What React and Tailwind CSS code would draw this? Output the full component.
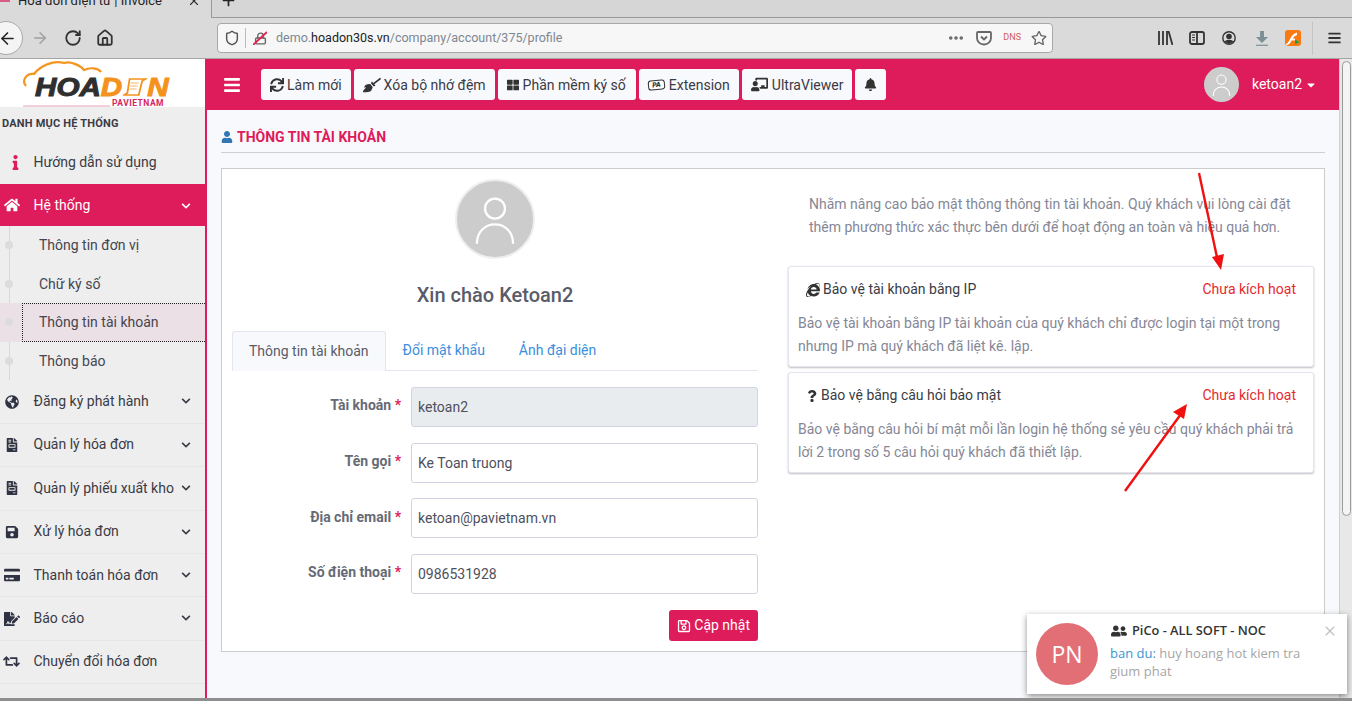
import React from "react";
import { FaSync, FaBroom, FaThLarge, FaBell, FaHome, FaInfo, FaGlobeAmericas, FaFileInvoice, FaSave, FaCreditCard, FaFileSignature, FaRetweet, FaUser, FaInternetExplorer, FaQuestion, FaChevronDown, FaBars, FaChalkboardTeacher, FaRegSave, FaCaretDown, FaUserFriends, FaRegStar, FaUsers } from "react-icons/fa";
import { ArrowLeft, ArrowRight, RotateCw, Home, Shield, MoreHorizontal, X, Plus, Lock } from "lucide-react";

const Avatar = ({ cls }) => (
  <div className={cls}>
    <svg viewBox="0 0 80 80" className="w-full h-full">
      <circle cx="40" cy="29" r="10.5" fill="none" stroke="#fff" strokeWidth="2.4" />
      <path d="M21 66 C21 39 59 39 59 66" fill="none" stroke="#fff" strokeWidth="2.4" />
    </svg>
  </div>
);

const TopBtn = ({ icon, children, gap = "gap-[3px]", pad = "px-[9px]" }) => (
  <div className={"h-[31px] bg-[#f8f9fc] rounded-[3px] flex items-center text-[14px] text-[#3a3b45] whitespace-nowrap " + gap + " " + pad}>
    {icon}
    {children && <span className="pt-[1px]">{children}</span>}
  </div>
);

const NavRow = ({ icon, label, chevron = true }) => (
  <div className="h-[43.4px] flex items-center border-b border-[#e6e6e6] relative shrink-0">
    <span className="w-[33.5px] flex justify-center pr-[10px] text-[#2f3242] shrink-0">{icon}</span>
    <span className="text-[14px] text-[#3a3b45] whitespace-nowrap">{label}</span>
    {chevron && <FaChevronDown className="absolute left-[181px] top-[16px] text-[10px] text-[#3a3b45]" />}
  </div>
);

const SubRow = ({ label, active }) => (
  <div className={"h-[38.6px] flex items-center relative shrink-0 " + (active ? "bg-[#ebe0e5]" : "")}>
    <span className="absolute left-[5px] top-[15px] w-[8px] h-[8px] rounded-full bg-[#dcdcdc]" />
    {active && <span className="absolute left-[22px] top-0 bottom-0 right-0 border-y border-l border-dotted border-[#222]" />}
    <span className="ml-[39px] text-[14px] text-[#45464f] whitespace-nowrap relative">{label}</span>
  </div>
);

const Field = ({ label, value, disabled, cls, labelPt = "pt-[8px]" }) => (
  <div className={"flex items-start " + cls}>
    <div className={"w-[179px] pr-[10px] text-right text-[14px] font-bold text-[#666a75] whitespace-nowrap " + labelPt}>
      {label} <span className="text-[#de1b5b]">*</span>
    </div>
    <div className={"flex-1 h-[40px] border border-[#d1d3e2] rounded-[3px] flex items-center px-[6px] text-[14px] text-[#4e505c] " + (disabled ? "bg-[#e9ecef]" : "bg-white")}>
      {value}
    </div>
  </div>
);

const Panel = ({ icon, title, body }) => (
  <div className="border border-[#e3e6f0] rounded-[3px] shadow-[0_1px_2px_rgba(0,0,0,0.25)] bg-white h-[101px]">
    <div className="h-[44px] pt-[1px] flex items-center justify-between pl-[17px] pr-[17px]">
      <div className="flex items-center gap-[3px] text-[14px] text-[#3a3b45]">{icon}<span>{title}</span></div>
      <span className="text-[14px] text-[#e8282f]">Chưa kích hoạt</span>
    </div>
    <div className="px-[9px] pt-[1px] text-[14px] leading-[23px] text-[#858796]">{body}</div>
  </div>
);

export default function App() {
  return (
    <div className="w-[1352px] h-[701px] overflow-hidden relative flex flex-col bg-white font-['Roboto',sans-serif]">
      {/* Tab strip */}
      <div className="h-[18px] shrink-0 flex bg-[#d6d6d6] overflow-hidden">
        <div className="w-[212px] h-[18px] bg-[#dadada] border-r border-[#999] flex items-center relative shrink-0">
          <span className="absolute left-[18px] top-[-8px] text-[13px] leading-[18px] text-[#222] whitespace-nowrap">Hóa đơn điện tử | Invoice</span>
          <X className="absolute left-[187px] top-[-6px] w-[14px] h-[14px] text-[#333]" strokeWidth={2} />
          <span className="absolute left-0 top-[-4px] w-[10px] h-[6px] bg-[#d7265e] opacity-70" />
        </div>
        <div className="flex-1 border-b border-[#999] relative">
          <Plus className="absolute left-[8px] top-[-8px] w-[17px] h-[17px] text-[#222]" strokeWidth={2.4} />
        </div>
      </div>
      {/* Toolbar */}
      <div className="h-[41px] shrink-0 bg-[#dadada] border-b border-[#a5a5a5] flex items-center relative">
        <div className="absolute left-[-11px] top-[3px] w-[34px] h-[34px] rounded-full bg-[#f4f4f4] border border-[#aaa] flex items-center justify-end pr-[5px]">
          <ArrowLeft className="w-[19px] h-[19px] text-[#222]" strokeWidth={2} />
        </div>
        <ArrowRight className="ml-[31px] w-[18px] h-[18px] text-[#a0a0a0] shrink-0" strokeWidth={2} />
        <RotateCw className="ml-[15px] w-[18px] h-[18px] text-[#333] shrink-0" strokeWidth={2.4} />
        <Home className="ml-[14px] w-[18px] h-[18px] text-[#333] shrink-0" strokeWidth={2.4} />
        <div className="ml-[103px] w-[836px] h-[30px] shrink-0 bg-[#f7f7f7] border border-[#a8a8a8] rounded-[4px] flex items-center text-[12.5px]">
          <Shield className="ml-[6px] w-[16px] h-[16px] text-[#555]" strokeWidth={2.2} />
          <span className="ml-[5px] w-px h-[20px] bg-[#bbb]" />
          <span className="relative ml-[7px] w-[14px] h-[14px] flex items-center justify-center">
            <Lock className="w-[13px] h-[13px] text-[#666]" strokeWidth={2.6} />
            <svg viewBox="0 0 14 14" className="absolute inset-0"><path d="M0 14 L14 1" stroke="#e8204e" strokeWidth="1.8" /></svg>
          </span>
          <span className="ml-[9px] pt-[1px] text-[#7c8794] whitespace-nowrap">demo.<span className="text-[#222]">hoadon30s.vn</span>/company/account/375/profile</span>
          <div className="ml-auto flex items-center">
            <MoreHorizontal className="w-[18px] h-[18px] text-[#666]" strokeWidth={2.8} />
            <svg viewBox="0 0 16 16" className="ml-[11px] w-[16px] h-[16px]"><path d="M2 2 H14 Q15 2 15 3 V8 A7 6.5 0 0 1 1 8 V3 Q1 2 2 2Z M5 6.5 L8 9.5 L11 6.5" fill="none" stroke="#666" strokeWidth="1.8" /></svg>
            <span className="ml-[11px] text-[9px] text-[#cf5a5a]">DNS</span>
            <FaRegStar className="ml-[10px] mr-[5px] w-[16px] h-[16px] text-[#666]" />
          </div>
        </div>
        <svg viewBox="0 0 15 14" className="ml-[105px] w-[15px] h-[14px] shrink-0" stroke="#333" strokeWidth="1.8" fill="none">
          <path d="M1 0 V14 M5 0 V14 M9 0 V14 M10.5 0 L14.5 14" />
        </svg>
        <svg viewBox="0 0 16 14" className="ml-[16px] w-[16px] h-[14px] shrink-0" fill="none" stroke="#333">
          <rect x="1" y="1" width="14" height="12" rx="2" strokeWidth="1.8" />
          <path d="M8 1 V13" strokeWidth="1.8" />
          <path d="M3 4 H6 M3 6.5 H6 M3 9 H6" strokeWidth="1" />
        </svg>
        <svg viewBox="0 0 14 14" className="ml-[17px] w-[14px] h-[14px] shrink-0" fill="none">
          <circle cx="7" cy="7" r="6.2" stroke="#333" strokeWidth="1.4" />
          <circle cx="7" cy="5.5" r="2.8" fill="#333" />
          <path d="M2.6 11 C3.5 8 10.5 8 11.4 11 L7 13Z" fill="#333" />
        </svg>
        <svg viewBox="0 0 14 15" className="ml-[19px] w-[14px] h-[15px] shrink-0">
          <path d="M5 0 H9 V6 H13 L7 12 L1 6 H5Z" fill="#7d9098" />
          <path d="M1 14.3 H13" stroke="#7d9098" strokeWidth="1.2" />
        </svg>
        <svg viewBox="0 0 16 16" className="ml-[16px] w-[16px] h-[16px] shrink-0">
          <rect width="16" height="16" rx="3" fill="#f97a12" />
          <path d="M1 14 C5 13 5 4 12 2.5 L12 5 C9 6 8 8 7.5 8.5 H10 V10.5 H6.5 C5.5 13 4 15 1 15.5Z" fill="#fff" />
          <path d="M10 9.5 L14.5 12 L10 14.5Z" fill="#16a34a" />
        </svg>
        <span className="ml-[11px] w-px h-[33px] bg-[#c4c4c4] shrink-0" />
        <FaBars className="ml-[15px] w-[13px] h-[14px] text-[#333] shrink-0" />
      </div>

      {/* Page */}
      <div className="flex-1 flex min-h-0">
        {/* Sidebar */}
        <aside className="w-[207px] shrink-0 bg-[#eeeeee] border-r-2 border-[#de1b5b] overflow-hidden flex flex-col">
          <div className="h-[48px] bg-white shrink-0 relative">
            <svg viewBox="0 0 150 50" className="absolute left-[20px] top-0 w-[150px] h-[50px]">
              <path d="M6 27 C1 21 7 14 14 15 C20 7 33 1 44 4 C50 2 60 6 64 11 C70 8 78 9 81 13" fill="none" stroke="#f4961e" strokeWidth="2.2" />
              <path d="M3 47 H90" stroke="#e8a0b8" strokeWidth="1" />
            </svg>
            <div className="absolute left-[35px] top-[18px] flex items-center origin-left scale-x-[1.14] h-[20px] text-[26px] leading-[20px] italic font-bold font-['Liberation_Sans',sans-serif] whitespace-nowrap [-webkit-text-stroke:1px_currentColor]">
              <span className="text-[#2f2f2f]">HOA</span>
              <span className="text-[#f4921e]">D</span>
              <svg viewBox="0 0 22 20" className="w-[22px] h-[20px] shrink-0">
                <path d="M6 2 H20 L17 4 L14 18 H1 L4 16Z" fill="#fff" stroke="#f4921e" strokeWidth="1.6" />
                <path d="M7 6 H14 M6.5 9 H13 M6 12 H12" stroke="#f6b66a" strokeWidth="1.2" />
              </svg>
              <span className="text-[#f4921e]">N</span>
            </div>
            <span className="absolute left-[112px] top-[40px] text-[8.5px] leading-[8px] font-bold text-[#d7265e] tracking-[0.5px]">PAVIETNAM</span>
          </div>
          <div className="h-[32px] shrink-0 pl-[2px] pt-[2px] flex items-center text-[11px] font-bold text-[#3a3b45] tracking-[0.2px]">DANH MỤC HỆ THỐNG</div>
          <div className="h-[45px] shrink-0 pt-[1px] flex items-center">
            <span className="w-[33.5px] flex justify-center pr-[2px] shrink-0 text-[#de1b5b]"><FaInfo className="text-[15px]" /></span>
            <span className="text-[14px] text-[#3a3b45]">Hướng dẫn sử dụng</span>
          </div>
          <div className="h-[42px] shrink-0 bg-[#de1b5b] flex items-center relative text-white">
            <span className="w-[33.5px] flex justify-center pr-[10px] shrink-0"><FaHome className="text-[16px]" /></span>
            <span className="text-[14px]">Hệ thống</span>
            <FaChevronDown className="absolute left-[181px] top-[17px] text-[10px]" />
          </div>
          <div className="relative shrink-0 h-[154.4px] pt-[0.3px] overflow-hidden">
            <span className="absolute left-[9px] top-0 bottom-0 w-px bg-[#d8d8d8] z-0" />
            <SubRow label="Thông tin đơn vị" />
            <SubRow label="Chữ ký số" />
            <SubRow label="Thông tin tài khoản" active />
            <SubRow label="Thông báo" />
          </div>
          <NavRow icon={<FaGlobeAmericas className="text-[14px]" />} label="Đăng ký phát hành" />
          <NavRow icon={<FaFileInvoice className="text-[14px]" />} label="Quản lý hóa đơn" />
          <NavRow icon={<FaFileInvoice className="text-[14px]" />} label="Quản lý phiếu xuất kho" />
          <NavRow icon={<FaSave className="text-[14px]" />} label="Xử lý hóa đơn" />
          <NavRow icon={<FaCreditCard className="text-[16px]" />} label="Thanh toán hóa đơn" />
          <NavRow icon={<FaFileSignature className="text-[16px]" />} label="Báo cáo" />
          <NavRow icon={<FaRetweet className="text-[17px]" />} label="Chuyển đổi hóa đơn" chevron={false} />
          <NavRow icon={<FaUsers className="text-[16px]" />} label="Danh mục" chevron={false} />
        </aside>

        {/* Main */}
        <div className="flex-1 min-w-0 flex flex-col bg-[#f8f9fc]">
          <header className="h-[51px] shrink-0 bg-[#de1b5b] flex items-center pl-[16px] pr-[22px]">
            <FaBars className="text-white text-[18px] mr-[20px]" />
            <div className="flex items-center gap-[3px]">
              <TopBtn icon={<FaSync className="text-[14px] text-[#333]" />}>Làm mới</TopBtn>
              <TopBtn icon={<FaBroom className="text-[18px] text-[#333]" />}>Xóa bộ nhớ đệm</TopBtn>
              <TopBtn gap="gap-[4px]" pad="pl-[9px] pr-[10px]" icon={<FaThLarge className="text-[12px] text-[#333]" />}>Phần mềm ký số</TopBtn>
              <TopBtn gap="gap-[4px]" icon={<span className="w-[17px] h-[10px] rounded-[3px] border border-[#333] bg-white text-[7px] leading-[8px] font-black italic text-center text-[#333] -rotate-6">PA</span>}>Extension</TopBtn>
              <TopBtn gap="gap-[4px]" icon={<FaChalkboardTeacher className="text-[17px] text-[#333]" />}>UltraViewer</TopBtn>
              <TopBtn icon={<FaBell className="text-[13px] text-[#333]" />}></TopBtn>
            </div>
            <div className="ml-auto flex items-center text-white text-[14px]">
              <Avatar cls="w-[35px] h-[35px] rounded-full bg-[#cccccc] mr-[13px]" />
              <span>ketoan2</span>
              <FaCaretDown className="ml-[3px] text-[12px]" />
            </div>
          </header>

          <div className="flex-1 min-h-0 px-[14px] pt-[17px]">
            <div className="flex items-center h-[26px] border-b border-[#cfcfcf] pb-[5px] mb-[15px]">
              <FaUser className="text-[12px] text-[#3076b5] mr-[4px]" />
              <span className="text-[14px] font-bold text-[#de1b5b]">THÔNG TIN TÀI KHOẢN</span>
            </div>
            <div className="h-[484px] bg-white border border-[#cccccc] flex gap-[30px] px-[10px]">
              {/* Left */}
              <div className="flex-1 min-w-0 flex flex-col">
                <Avatar cls="self-center mt-[10px] w-[80px] h-[80px] rounded-full bg-[#cccccc] border-2 border-[#eeeeee]" />
                <h2 className="mt-[22px] text-center text-[20px] leading-[28px] font-medium text-[#5a5c69]">Xin chào Ketoan2</h2>
                <div className="mt-[22px] h-[40px] flex border-b border-[#e3e6f0] text-[14px]">
                  <div className="h-[40px] px-[16px] bg-[#f8f9fc] border border-b-0 border-[#e3e6f0] rounded-t-[3px] flex items-center text-[#5a5c69]">Thông tin tài khoản</div>
                  <div className="px-[17px] flex items-center text-[#3b8ede]">Đổi mật khẩu</div>
                  <div className="px-[17px] flex items-center text-[#3b8ede]">Ảnh đại diện</div>
                </div>
                <Field cls="mt-[16px]" label="Tài khoản" value="ketoan2" disabled />
                <Field cls="mt-[16px]" label="Tên gọi" value="Ke Toan truong" />
                <Field cls="mt-[15px]" label="Địa chỉ email" value="ketoan@pavietnam.vn" labelPt="pt-[9px]" />
                <Field cls="mt-[16px]" label="Số điện thoại" value="0986531928" />
                <div className="mt-[16px] self-end h-[31px] px-[8px] bg-[#de1b5b] rounded-[3px] text-white text-[14px] flex items-center gap-[3px]">
                  <FaRegSave className="text-[14px]" /><span>Cập nhật</span>
                </div>
              </div>
              {/* Right */}
              <div className="flex-1 min-w-0 flex flex-col">
                <p className="mt-[24px] ml-[21px] text-[14px] leading-[23px] text-[#858796] w-[500px]">
                  Nhằm nâng cao bảo mật thông thông tin tài khoản. Quý khách vui lòng cài đặt thêm phương thức xác thực bên dưới để hoạt động an toàn và hiệu quả hơn.
                </p>
                <div className="mt-[27px] flex flex-col gap-[5px]">
                  <Panel icon={<FaInternetExplorer className="text-[14px] text-[#333]" />} title="Bảo vệ tài khoản bằng IP" body="Bảo vệ tài khoản bằng IP tài khoản của quý khách chỉ được login tại một trong nhưng IP mà quý khách đã liệt kê. lập." />
                  <Panel icon={<FaQuestion className="text-[12px] text-[#333]" />} title="Bảo vệ bằng câu hỏi bảo mật" body="Bảo vệ bằng câu hỏi bí mật mỗi lần login hệ thống sẻ yêu cầu quý khách phải trả lời 2 trong số 5 câu hỏi quý khách đã thiết lập." />
                </div>
              </div>
            </div>
          </div>
        </div>

        {/* Scrollbar */}
        <div className="w-[13px] shrink-0 bg-[#e8e8e8] border-l border-[#d0d0d0] relative">
          <span className="absolute left-[2px] top-[2px] w-[9px] h-[455px] rounded-[5px] bg-[#f4f4f4] border border-[#9a9a9a]" />
        </div>
      </div>

      {/* Arrows over the content */}
      <svg className="absolute left-0 top-0 pointer-events-none" width="1352" height="701">
        <path d="M1199 173 L1218 262" stroke="#f01010" strokeWidth="2.4" fill="none" />
        <path d="M1221 270 L1212 257 L1224 254Z" fill="#f01010" />
        <path d="M1125 491 L1181 414" stroke="#f01010" strokeWidth="2.4" fill="none" />
        <path d="M1187 404 L1184 419 L1173 412Z" fill="#f01010" />
      </svg>

      {/* Chat notification */}
      <div className="absolute left-[1027px] top-[614px] w-[320px] h-[80px] bg-white shadow-[0_2px_6px_rgba(0,0,0,0.45)] font-['Open_Sans',sans-serif]">
        <div className="absolute left-[9px] top-[9px] w-[62px] h-[62px] rounded-full bg-[#e26f76] flex items-center justify-center text-white text-[23px]">PN</div>
        <div className="absolute left-[84px] top-[7px] flex items-center gap-[5px] text-[12.8px] font-semibold text-[#333] whitespace-nowrap">
          <FaUserFriends className="text-[16px] text-[#333]" /><span>PiCo - ALL SOFT - NOC</span>
        </div>
        <X className="absolute left-[295px] top-[9px] w-[16px] h-[16px] text-[#bdbdbd]" strokeWidth={1.6} />
        <p className="absolute left-[83px] top-[30px] w-[205px] text-[13px] leading-[18px] text-[#a6a6a6]"><span className="text-[#3a96d2]">ban du:</span> huy hoang hot kiem tra gium phat</p>
      </div>

      {/* Window edge */}
      <div className="absolute left-0 right-0 bottom-0 h-[3px] bg-[#8f8f8f]" />
    </div>
  );
}
